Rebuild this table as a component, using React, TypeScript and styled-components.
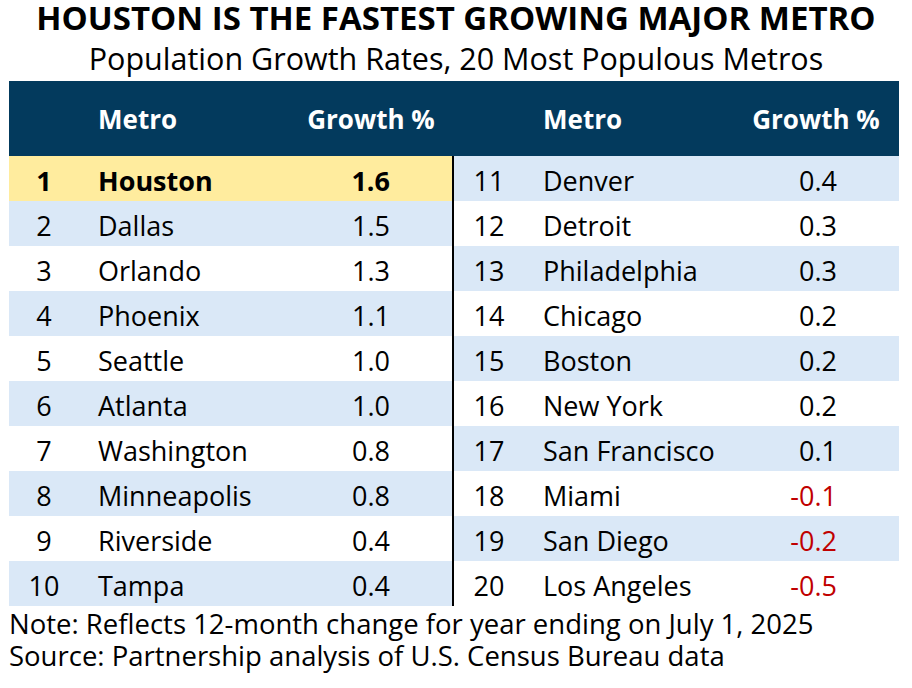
import React from "react";
import styled, { createGlobalStyle } from "styled-components";

type Metro = { rank: number; name: string; growth: number };

const metros: Metro[] = [
  { rank: 1, name: "Houston", growth: 1.6 },
  { rank: 2, name: "Dallas", growth: 1.5 },
  { rank: 3, name: "Orlando", growth: 1.3 },
  { rank: 4, name: "Phoenix", growth: 1.1 },
  { rank: 5, name: "Seattle", growth: 1.0 },
  { rank: 6, name: "Atlanta", growth: 1.0 },
  { rank: 7, name: "Washington", growth: 0.8 },
  { rank: 8, name: "Minneapolis", growth: 0.8 },
  { rank: 9, name: "Riverside", growth: 0.4 },
  { rank: 10, name: "Tampa", growth: 0.4 },
  { rank: 11, name: "Denver", growth: 0.4 },
  { rank: 12, name: "Detroit", growth: 0.3 },
  { rank: 13, name: "Philadelphia", growth: 0.3 },
  { rank: 14, name: "Chicago", growth: 0.2 },
  { rank: 15, name: "Boston", growth: 0.2 },
  { rank: 16, name: "New York", growth: 0.2 },
  { rank: 17, name: "San Francisco", growth: 0.1 },
  { rank: 18, name: "Miami", growth: -0.1 },
  { rank: 19, name: "San Diego", growth: -0.2 },
  { rank: 20, name: "Los Angeles", growth: -0.5 }
];

const GlobalStyle = createGlobalStyle`
  body {
    margin: 0;
    background: #ffffff;
    font-family: "Open Sans", "Noto Sans", sans-serif;
    color: #000000;
  }
`;

export default function App() {
  const left = metros.slice(0, 10);
  const right = metros.slice(10);

  return (
    <Page>
      <GlobalStyle />
      <Title>HOUSTON IS THE FASTEST GROWING MAJOR METRO</Title>
      <Subtitle>Population Growth Rates, 20 Most Populous Metros</Subtitle>
      <Table>
        <HeaderBand>
          <HeaderHalf>
            <span />
            <HeadCell>Metro</HeadCell>
            <HeadCell $center>Growth %</HeadCell>
          </HeaderHalf>
          <HeaderHalf>
            <span />
            <HeadCell>Metro</HeadCell>
            <HeadCell $center>Growth %</HeadCell>
          </HeaderHalf>
        </HeaderBand>
        <Body>
          <Half>
            {left.map((m) => (
              <MetroRow key={m.rank} metro={m} />
            ))}
          </Half>
          <Divider />
          <Half $right>
            {right.map((m) => (
              <MetroRow key={m.rank} metro={m} />
            ))}
          </Half>
        </Body>
      </Table>
      <Notes>
        <NoteLine>Note: Reflects 12-month change for year ending on July 1, 2025</NoteLine>
        <NoteLine>Source: Partnership analysis of U.S. Census Bureau data</NoteLine>
      </Notes>
    </Page>
  );
}

function MetroRow({ metro }: { metro: Metro }) {
  const top = metro.rank === 1;
  // left column stripes even ranks, right column stripes odd ranks
  const striped = metro.rank <= 10 ? metro.rank % 2 === 0 : metro.rank % 2 === 1;
  const tone = top ? "gold" : striped ? "blue" : "white";
  return (
    <Row $tone={tone} $bold={top}>
      <Rank>{metro.rank}</Rank>
      <Name>{metro.name}</Name>
      <Growth $negative={metro.growth < 0}>{metro.growth.toFixed(1)}</Growth>
    </Row>
  );
}

const Page = styled.div`
  width: 912px;
  height: 688px;
  padding: 0 13px 0 9px;
  box-sizing: border-box;
  display: flex;
  flex-direction: column;
`;

const Title = styled.div`
  font-weight: 700;
  font-size: 33px;
  line-height: 36px;
  height: 36px;
  text-align: center;
  margin-right: -4px;
  white-space: nowrap;
`;

const Subtitle = styled.div`
  font-size: 30.5px;
  line-height: 45px;
  height: 45px;
  text-align: center;
  margin-right: -4px;
  white-space: nowrap;
`;

const Table = styled.div`
  display: flex;
  flex-direction: column;
`;

const HeaderBand = styled.div`
  height: 75px;
  background: #033a5d;
  color: #ffffff;
  display: flex;
`;

const COLS = "70px 1fr 150px";

const HeaderHalf = styled.div`
  width: 445px;
  display: grid;
  grid-template-columns: ${COLS};
  align-items: center;
  padding-right: 8px;
  box-sizing: border-box;
`;

const HeadCell = styled.div<{ $center?: boolean }>`
  font-weight: 700;
  font-size: 26px;
  padding-left: ${(p) => (p.$center ? "0" : "19px")};
  text-align: ${(p) => (p.$center ? "center" : "left")};
  white-space: nowrap;
`;

const Body = styled.div`
  display: flex;
`;

const Half = styled.div<{ $right?: boolean }>`
  width: ${(p) => (p.$right ? "445px" : "443px")};
  display: flex;
  flex-direction: column;
`;

const Divider = styled.div`
  width: 2px;
  background: #000000;
`;

const toneColors: Record<string, string> = {
  gold: "#ffec9e",
  blue: "#dae8f7",
  white: "#ffffff"
};

const Row = styled.div<{ $tone: string; $bold: boolean }>`
  height: 45px;
  display: grid;
  grid-template-columns: ${COLS};
  align-items: center;
  background: ${(p) => toneColors[p.$tone]};
  font-size: 27px;
  font-weight: ${(p) => (p.$bold ? 700 : 400)};
  padding-top: 3px;
  box-sizing: border-box;
  padding-right: 8px;
`;

const Rank = styled.div`
  text-align: center;
`;

const Name = styled.div`
  padding-left: 19px;
  white-space: nowrap;
`;

const Growth = styled.div<{ $negative: boolean }>`
  text-align: right;
  padding-right: 54px;
  color: ${(p) => (p.$negative ? "#c00000" : "#000000")};
`;

const Notes = styled.div`
  font-size: 27.5px;
  padding-top: 2px;
  display: flex;
  flex-direction: column;
`;

const NoteLine = styled.div`
  line-height: 32px;
  height: 32px;
  white-space: nowrap;
`;
